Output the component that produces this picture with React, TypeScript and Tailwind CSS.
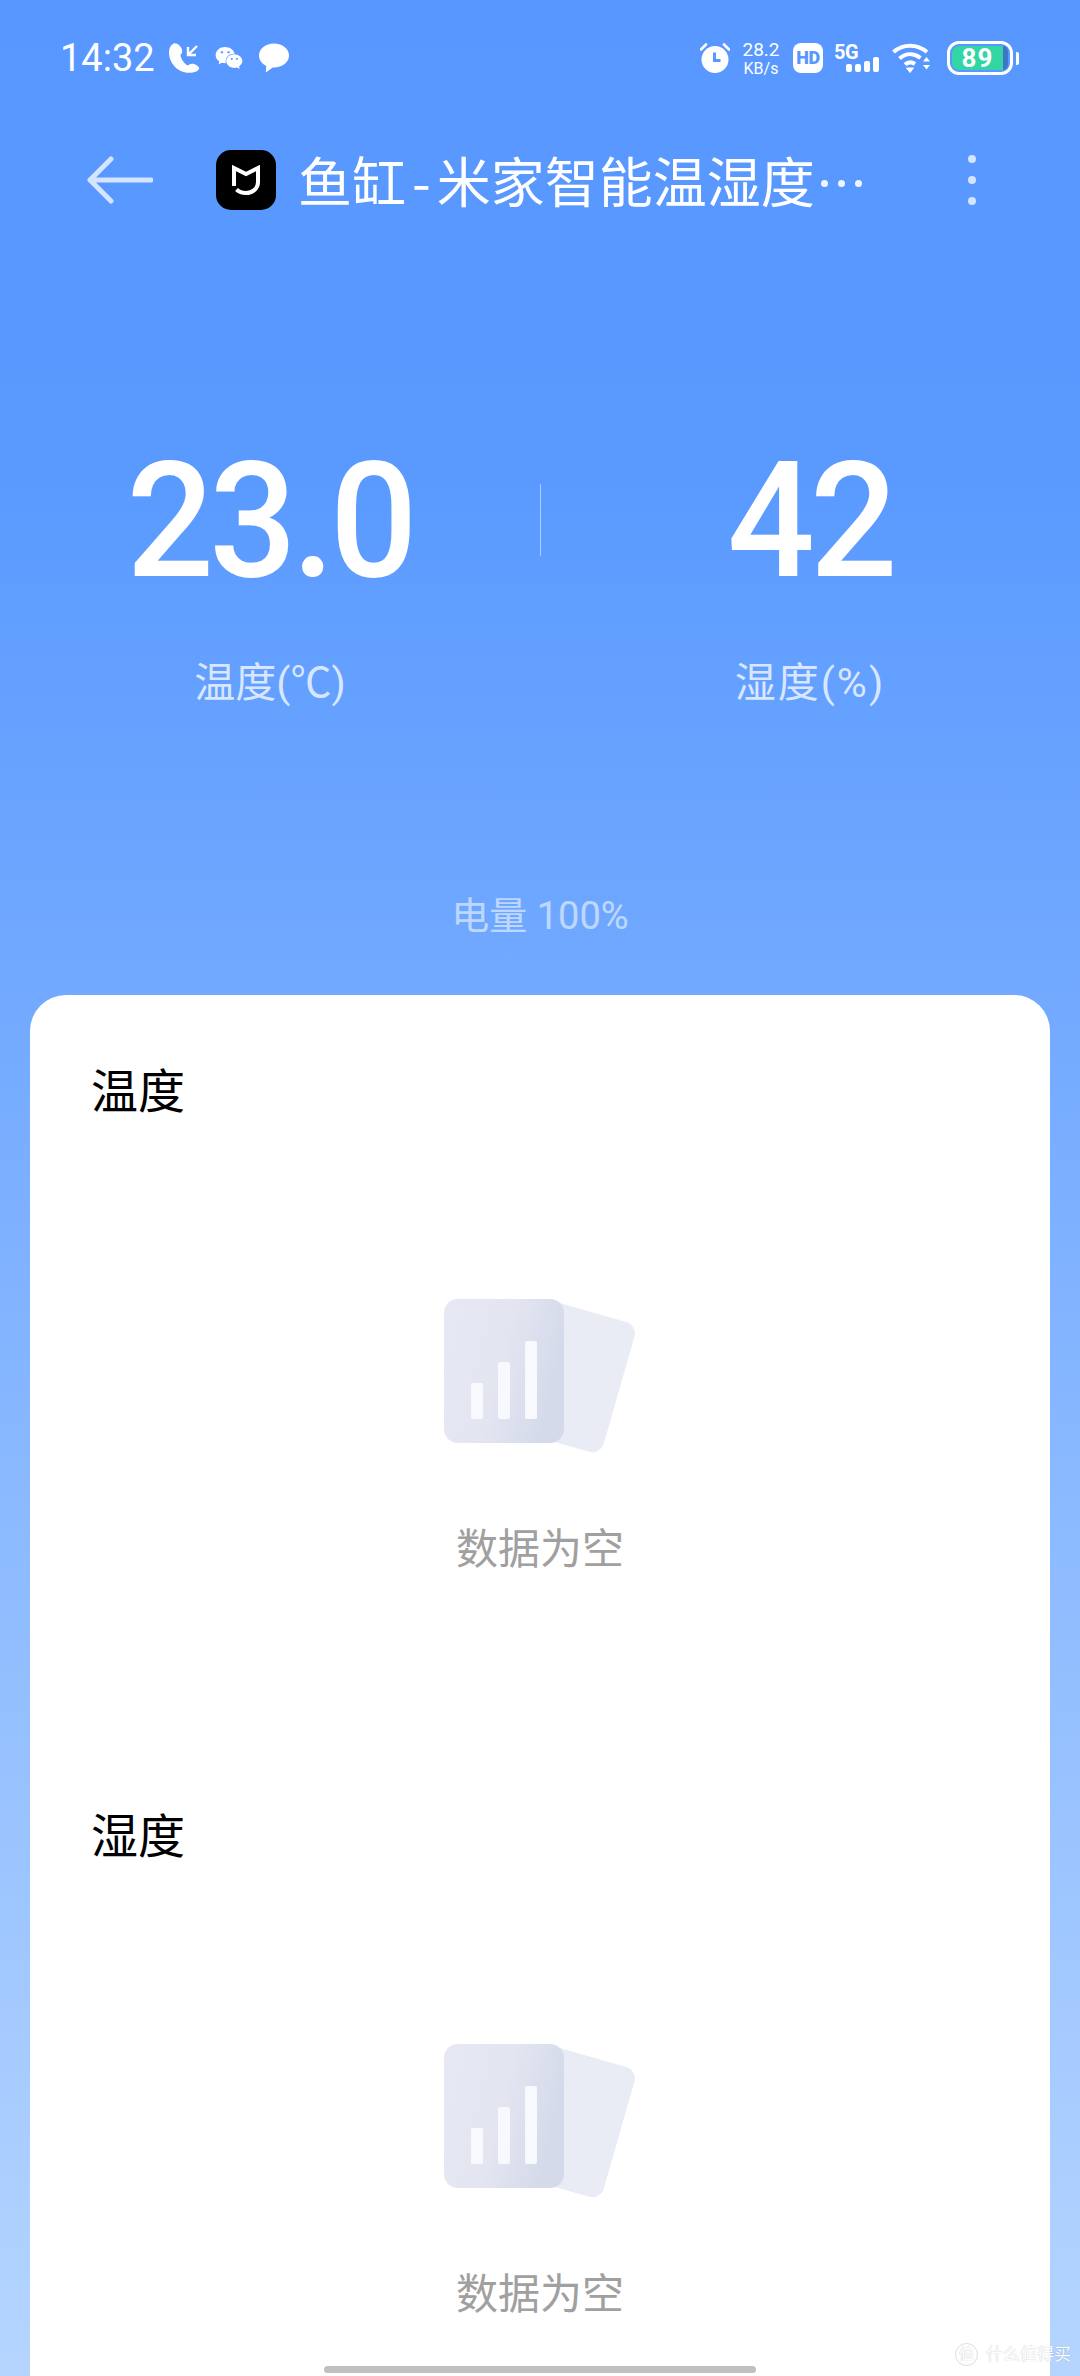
import { FaWeixin } from "react-icons/fa";

const sans = "font-['Roboto','Noto_Sans_CJK_SC',sans-serif]";

function PhoneIcon() {
  return (
    <svg width="30" height="30" viewBox="0 0 30 30" fill="white">
      <path d="M4.500 0.500C1.500 2 0 5.500 0 9.500c0 10 8 20 20 20.300 4 .1 9.500-1.300 10-4.300.3-1.800-2-3.500-5-4.500-2.500-.8-4.500 0-6 1.500-3-1-7.500-6.500-7.500-11 1.500-1 2-2.500 1.500-5C12 3 7.500-1 4.500.5z" />
      <path d="M28 3 L19.500 11.500 M19 4 V12 H27" fill="none" stroke="white" strokeWidth="2.400" />
    </svg>
  );
}

function AlarmIcon() {
  return (
    <svg width="30" height="30" viewBox="0 0 30 30" fill="white">
      <circle cx="15" cy="16.500" r="13.500" />
      <path d="M1 6.500 L6 1.500 M29 6.500 L24 1.500" stroke="white" strokeWidth="2.600" strokeLinecap="round" />
      <path d="M14.500 9.500 V17.500 H20.500" fill="none" stroke="#5797ff" strokeWidth="3" />
    </svg>
  );
}

function SignalIcon() {
  return (
    <div className="relative h-[30px] w-[45px]">
      <span className="absolute left-0 top-[-3px] text-[20px] font-bold leading-[24px] tracking-[-0.5px] text-white">5G</span>
      <div className="absolute bottom-[1px] right-0 flex items-end gap-[3px]">
        <span className="h-[8px] w-[6px] rounded-[2px] bg-white" />
        <span className="h-[8px] w-[6px] rounded-[2px] bg-white" />
        <span className="h-[11px] w-[6px] rounded-[2px] bg-white" />
        <span className="h-[15px] w-[6px] rounded-[2px] bg-white" />
      </div>
    </div>
  );
}

function WifiIcon() {
  return (
    <svg width="38" height="30" viewBox="0 0 38 30" fill="none" stroke="white" strokeWidth="4">
      <path d="M1.500 9C11 0.500 25 0.500 35 9" />
      <path d="M7.500 15.500C14 10 22 10 28.500 15" />
      <path d="M13 21.500C16 19 20 19 23 21" />
      <path d="M14.500 25L18 29.500L21.500 25Z" fill="white" strokeWidth="1" />
      <path d="M31 18.500L34.500 14L38 18.500ZM31 22L38 22L34.500 26.500Z" fill="white" stroke="none" />
    </svg>
  );
}

function Battery() {
  return (
    <div className="flex items-center">
      <div className="flex h-[34px] w-[66px] overflow-hidden rounded-[12px] border-[3px] border-white p-[2px]">
        <div className="flex flex-1 items-center justify-center rounded-l-[7px] bg-[#31d6a4] text-[26px] font-bold leading-none tracking-[1px] text-white">
          89
        </div>
        <div className="w-[5px] rounded-r-[5px] bg-[#3f74c8]" />
      </div>
      <div className="ml-[3px] h-[13px] w-[3px] rounded-r-[2px] bg-white" />
    </div>
  );
}

function StatusBar() {
  return (
    <div className="flex h-[116px] items-center pl-[60px] pr-[61px] text-white">
      <span className="w-[109px] text-[38px] leading-none">14:32</span>
      <PhoneIcon />
      <FaWeixin className="ml-[16px] text-[28px]" />
      <svg className="ml-[16px]" width="30" height="30" viewBox="0 0 30 30" fill="white">
        <path d="M15 0.500C6.700 0.500 0 5.800 0 12.500c0 4.400 2.900 8.200 7.200 10.300l-.4 6.700 7-5.100c.4 0 .8.100 1.200.100 8.300 0 15-5.300 15-12S23.300.5 15 .5z" />
      </svg>
      <div className="ml-auto flex items-center">
        <AlarmIcon />
        <div className="ml-[12px] flex w-[38px] flex-col items-center leading-none">
          <span className="text-[19px]">28.2</span>
          <span className="mt-[2px] text-[16px]">KB/s</span>
        </div>
        <div className="ml-[13px] flex h-[30px] w-[30px] items-center justify-center rounded-[8px] bg-white text-[18px] font-black leading-none tracking-[-0.5px] text-[#5797ff]">
          HD
        </div>
        <div className="ml-[11px]">
          <SignalIcon />
        </div>
        <div className="ml-[13px]">
          <WifiIcon />
        </div>
        <div className="ml-[17px]">
          <Battery />
        </div>
      </div>
    </div>
  );
}

function MijiaLogo() {
  return (
    <div className="flex h-[60px] w-[60px] items-center justify-center rounded-[15px] bg-black">
      <svg width="28" height="30" viewBox="0 0 28 30" fill="none" stroke="white" strokeWidth="4">
        <path d="M2 21V3L14 9L26 3V17C26 24 20 28 14 28C10 28 7 27 4.500 24.500" />
      </svg>
    </div>
  );
}

function Header() {
  return (
    <div className="flex h-[128px] items-center pl-[87px] pr-[104px] text-white">
      <svg width="66" height="48" viewBox="0 0 66 48" fill="none" stroke="white" strokeOpacity="0.75" strokeWidth="5" strokeLinecap="round" strokeLinejoin="round">
        <path d="M3 24H64M24 3L3 24L24 45" />
      </svg>
      <div className="ml-[63px]">
        <MijiaLogo />
      </div>
      <span className="ml-[22px] font-['Noto_Sans_CJK_SC',sans-serif] text-[54px] leading-none">
        鱼缸<span className="mx-[6px]">-</span>米家智能温湿度
      </span>
      <div className="ml-[6px] mt-[6px] flex gap-[10px]">
        <span className="h-[7px] w-[7px] rounded-full bg-white/90" />
        <span className="h-[7px] w-[7px] rounded-full bg-white/90" />
        <span className="h-[7px] w-[7px] rounded-full bg-white/90" />
      </div>
      <div className="ml-auto flex flex-col gap-[13px]">
        <span className="h-[8px] w-[8px] rounded-full bg-white/75" />
        <span className="h-[8px] w-[8px] rounded-full bg-white/75" />
        <span className="h-[8px] w-[8px] rounded-full bg-white/75" />
      </div>
    </div>
  );
}

function Reading({ value, label, spaced }: { value: string; label: string; spaced?: boolean }) {
  return (
    <div className="flex flex-col items-center">
      <span className="h-[160px] origin-center scale-x-[0.95] text-[162px] font-medium leading-[160px] tracking-[-5px] text-white">{value}</span>
      <span className={`mt-[52px] h-[60px] text-[41px] leading-[60px] text-white/75 ${spaced ? "tracking-[2px]" : ""}`}>{label}</span>
    </div>
  );
}

function EmptyIcon() {
  return (
    <svg width="196" height="156" viewBox="0 0 196 156">
      <defs>
        <linearGradient id="front" x1="0" y1="0" x2="1" y2="0.3">
          <stop offset="0" stopColor="#e6e9f3" />
          <stop offset="0.55" stopColor="#e3e6f1" />
          <stop offset="1" stopColor="#d5daea" />
        </linearGradient>
      </defs>
      <rect x="88" y="-4" width="110" height="135" rx="12" fill="#e9ecf5" transform="rotate(16 88 -4)" />
      <rect x="0" y="0" width="120" height="144" rx="14" fill="url(#front)" />
      <rect x="27" y="84" width="12" height="36" rx="2" fill="#f8f9fc" />
      <rect x="54" y="63" width="12" height="57" rx="2" fill="#f8f9fc" />
      <rect x="81" y="42" width="12" height="78" rx="2" fill="#f8f9fc" />
    </svg>
  );
}

function ChartSection({ title }: { title: string }) {
  return (
    <section className="flex flex-col">
      <h2 className="ml-[61px] h-[60px] text-[47px] font-normal leading-[60px] text-black">{title}</h2>
      <div className="mt-[177px] flex flex-col items-center">
        <div className="ml-[4px]">
          <EmptyIcon />
        </div>
        <span className="mt-[65px] h-[60px] text-[42px] leading-[60px] text-[#a0a0a0]">数据为空</span>
      </div>
    </section>
  );
}

export default function App() {
  return (
    <div className={`relative flex h-[2376px] w-[1080px] flex-col overflow-hidden bg-[linear-gradient(180deg,#5797ff_0%,#5a9aff_20%,#70a8ff_40%,#b5d5ff_100%)] ${sans}`}>
      <StatusBar />
      <Header />

      <div className="relative mt-[197px] grid grid-cols-2">
        <Reading value="23.0" label="温度(℃)" />
        <Reading value="42" label="湿度(%)" spaced />
        <span className="absolute left-[540px] top-[43px] h-[72px] w-px bg-white/50" />
      </div>

      <p className="mt-[178px] h-[50px] text-center text-[38px] leading-[50px] text-white/55">电量 100%</p>

      <main className="mx-[30px] mt-[54px] flex flex-1 flex-col gap-[227px] rounded-t-[36px] bg-white pt-[67px]">
        <ChartSection title="温度" />
        <ChartSection title="湿度" />
      </main>

      {/* gesture bar and image watermark sit on top of the page */}
      <div className="absolute bottom-[3px] left-[324px] h-[7px] w-[432px] rounded-full bg-[#c0c0c0]" />
      <div className="absolute bottom-[10px] right-[9px] flex items-center gap-[8px] text-white [text-shadow:0_0_1px_rgba(0,0,0,0.3)]">
        <span className="flex h-[23px] w-[23px] items-center justify-center rounded-full border border-[#dddddd] text-[15px] leading-none">值</span>
        <span className="text-[17px] leading-none">什么值得买</span>
      </div>
    </div>
  );
}
